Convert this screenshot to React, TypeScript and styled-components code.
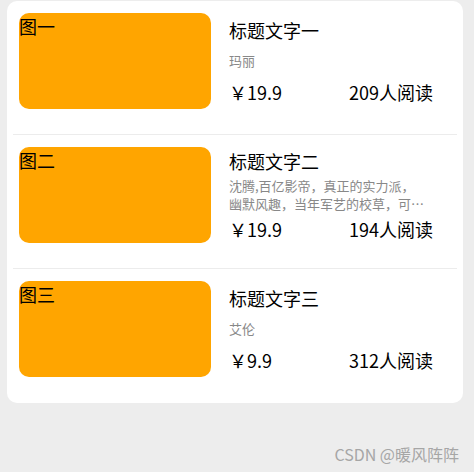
import React from "react";
import styled, { createGlobalStyle } from "styled-components";

const GlobalStyle = createGlobalStyle`
  html, body {
    margin: 0;
    padding: 0;
    background: #ededed;
  }
  body {
    font-family: "Noto Sans CJK SC", "Noto Sans", sans-serif;
  }
`;

const Page = styled.div`
  width: 474px;
  height: 472px;
  box-sizing: border-box;
  padding: 1px 11px 0 7px;
  display: flex;
  flex-direction: column;
`;

const Card = styled.div`
  background: #fff;
  border-radius: 10px;
  padding: 0 6px;
`;

const Item = styled.div<{ $last?: boolean }>`
  display: flex;
  padding: 12px 6px 25px;
  border-bottom: 1px solid ${(p) => (p.$last ? "transparent" : "#ececec")};
`;

const Thumb = styled.div`
  width: 192px;
  height: 96px;
  flex-shrink: 0;
  background: #ffa500;
  border-radius: 10px;
  font-size: 18px;
  line-height: 26px;
  color: #000;
  margin-right: 18px;
`;

const Info = styled.div`
  width: 204px;
  height: 96px;
  display: flex;
  flex-direction: column;
  justify-content: space-around;
`;

const Title = styled.div`
  font-size: 18px;
  line-height: 26px;
  color: #000;
`;

const Desc = styled.div`
  width: 198px;
  font-size: 13px;
  line-height: 18px;
  color: #888;
  display: -webkit-box;
  -webkit-line-clamp: 2;
  -webkit-box-orient: vertical;
  overflow: hidden;
`;

const PriceRow = styled.div`
  display: flex;
  justify-content: space-between;
  font-size: 18px;
  line-height: 26px;
  color: #000;
`;

const Footer = styled.div`
  margin-top: 39px;
  padding-right: 4px;
  text-align: right;
  font-size: 16px;
  color: #a6a6a6;
`;

const items = [
  { img: "图一", title: "标题文字一", desc: "玛丽", price: "￥19.9", reads: "209人阅读" },
  {
    img: "图二",
    title: "标题文字二",
    desc: "沈腾,百亿影帝，真正的实力派，幽默风趣，当年军艺的校草，可谓是才华横溢",
    price: "￥19.9",
    reads: "194人阅读",
  },
  { img: "图三", title: "标题文字三", desc: "艾伦", price: "￥9.9", reads: "312人阅读" },
];

export default function App() {
  return (
    <>
      <GlobalStyle />
      <Page>
        <Card>
          {items.map((it, i) => (
            <Item key={i} $last={i === items.length - 1}>
              <Thumb>{it.img}</Thumb>
              <Info>
                <Title>{it.title}</Title>
                <Desc>{it.desc}</Desc>
                <PriceRow>
                  <span>{it.price}</span>
                  <span>{it.reads}</span>
                </PriceRow>
              </Info>
            </Item>
          ))}
        </Card>
        <Footer>CSDN @暖风阵阵</Footer>
      </Page>
    </>
  );
}
